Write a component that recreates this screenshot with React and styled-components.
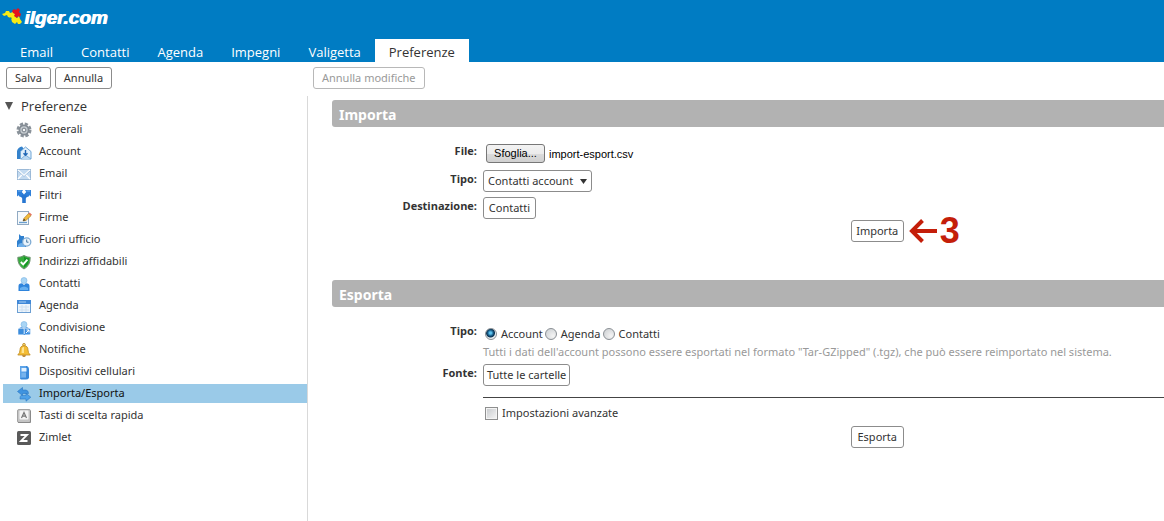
import React from "react";
import styled, { createGlobalStyle, css } from "styled-components";

const Global = createGlobalStyle`
  * { box-sizing: border-box; }
  body {
    margin: 0;
    background: #fff;
    color: #333;
    font: 11px/16px "Noto Sans", "Open Sans", sans-serif;
  }
  button, select, input { font: inherit; color: inherit; margin: 0; }
`;

const Page = styled.div`
  min-height: 100vh;
  display: flex;
  flex-direction: column;
`;

const Header = styled.header`
  background: #007cc3;
`;

const Brand = styled.a`
  display: flex;
  align-items: flex-start;
  height: 39px;
  padding: 7px 0 0 2px;
  color: #fff;
  text-decoration: none;
`;

const BrandName = styled.span`
  font: italic bold 19px/22px "Liberation Sans", Arial, sans-serif;
  text-shadow: 1px 0 #fff;
`;

const Tabs = styled.nav`
  display: flex;
  padding-left: 6px;
`;

const Tab = styled.a`
  height: 23px;
  padding: 2px 14px 0;
  font-family: "Open Sans", "Noto Sans", sans-serif;
  font-size: 13px;
  line-height: 22px;
  text-decoration: none;
  color: ${(p) => (p.$active ? "#333" : "#fff")};
  background: ${(p) => (p.$active ? "#fff" : "transparent")};
`;

const Toolbar = styled.div`
  display: flex;
  height: 34px;
  padding-top: 5px;
`;

const ToolGroup = styled.div`
  display: flex;
  gap: 4px;
  padding-left: 6px;
  width: ${(p) => p.$width || "auto"};
`;

const control = css`
  height: 22px;
  border: 1px solid ${(p) => (p.disabled ? "#b8b8b8" : "#8c8c8c")};
  border-radius: 3px;
  background: #fff;
  line-height: 18px;
`;

const Button = styled.button`
  ${control}
  min-width: ${(p) => (p.$tool ? "0" : "53px")};
  padding: ${(p) => (p.$tool ? "0 8px" : "0 3px")};
  color: ${(p) => (p.disabled ? "#999" : "#333")};
  white-space: nowrap;
`;

const Body = styled.div`
  flex: 1;
  display: flex;
`;

const Sidebar = styled.nav`
  width: 308px;
  flex: none;
  padding: 0 0 16px 3px;
  border-right: 1px solid #d9d9d9;
`;

const TreeHead = styled.h2`
  display: flex;
  align-items: center;
  gap: 8px;
  height: 20px;
  margin: 0 0 4px 2px;
  font-family: "Open Sans", "Noto Sans", sans-serif;
  font-size: 13px;
  font-weight: normal;
`;

const Tree = styled.ul`
  list-style: none;
  margin: 0;
  padding: 0;
  display: grid;
  gap: 3px;
`;

const TreeLink = styled.a`
  display: flex;
  align-items: center;
  gap: 7px;
  height: 19px;
  padding-left: 13px;
  text-decoration: none;
  color: ${(p) => (p.$active ? "#111" : "#333")};
  background: ${(p) => (p.$active ? "#9acae8" : "transparent")};
`;

const TreeText = styled.span`
  padding-bottom: 2px;
`;

const Main = styled.main`
  flex: 1;
  min-width: 0;
  padding: 4px 0 16px 24px;
`;

const Section = styled.section`
  margin-bottom: 37px;
`;

const SectionTitle = styled.h2`
  margin: 0 0 15px;
  height: 27px;
  padding: 2px 7px 0;
  border-radius: 3px 0 0 3px;
  background: #b2b2b2;
  color: #fff;
  font-size: 14px;
  line-height: 26px;
`;

const Row = styled.div`
  display: grid;
  grid-template-columns: 145px 1fr;
  column-gap: 6px;
  align-items: start;
  min-height: ${(p) => p.$height};
`;

const Label = styled.label`
  grid-column: 1;
  text-align: right;
  font-family: "Open Sans", "Noto Sans", sans-serif;
  font-weight: bold;
  line-height: 18px;
`;

const Field = styled.div`
  grid-column: 2;
  display: flex;
  align-items: center;
`;

const FilePick = styled(Field)`
  padding: 2px 0 0 3px;
  gap: 4px;
  color: #000;
  font: 11px/16px "Liberation Sans", Arial, sans-serif;
`;

const FileInput = styled.input`
  position: absolute;
  width: 1px;
  height: 1px;
  opacity: 0;
`;

const FileButton = styled.label`
  width: 59px;
  height: 19px;
  border: 1px solid #777;
  border-radius: 3px;
  background: linear-gradient(#f3f3f3, #ebebeb 50%, #dcdcdc 50%, #d0d0d0);
  text-align: center;
`;

const SelectBox = styled.span`
  display: grid;
  align-items: center;
  width: 109px;

  & > * { grid-area: 1 / 1; }
  & > svg { justify-self: end; margin-right: 5px; pointer-events: none; }
`;

const Select = styled.select`
  ${control}
  appearance: none;
  width: 100%;
  padding: 0 4px;
`;

const Choices = styled(Field)`
  gap: 2px;
  padding: 2px 0 0 2px;
`;

const Choice = styled.label`
  display: flex;
  align-items: center;
  gap: 4px;
  height: 20px;
`;

const Radio = styled.input`
  appearance: none;
  width: 12px;
  height: 12px;
  border: 1px solid #8a8f94;
  border-radius: 50%;
  background: radial-gradient(circle at 70% 70%, #f4f4f4, #c9cdd0);

  &:checked {
    background: radial-gradient(circle at 45% 40%, #5ec4f0 0 1px, #12537f 3px, #0c3350 4px, #e8eef2 5px);
  }
`;

const Checkbox = styled.input`
  appearance: none;
  width: 13px;
  height: 13px;
  border: 1px solid #8e8f8f;
  background: linear-gradient(135deg, #c6c9cc, #f6f6f6);
  box-shadow: inset 0 0 0 1px #f4f4f4;
`;

const Hint = styled.p`
  grid-column: 2;
  margin: 0;
  color: #999;
`;

const Rule = styled.hr`
  grid-column: 2;
  width: 100%;
  margin: 0;
  border: 0;
  border-top: 1px solid #444;
`;

const Action = styled(Field)`
  padding-left: 54%;
  gap: 5px;
  height: 24px;
`;

const Step = styled.span`
  display: flex;
  align-items: center;
  gap: 3px;
  color: #c41e0a;
  font: bold 36px/24px "Liberation Sans", Arial, sans-serif;
`;

const Icon = ({ children }) => (
  <svg width="16" height="16" viewBox="0 0 16 16" aria-hidden="true">{children}</svg>
);

const Person = () => (
  <>
    <circle cx="8" cy="4.5" r="3" fill="#a9d5f5" stroke="#79b4e2" strokeWidth=".6" />
    <path d="M2.500 15V10Q2.500 7.300 6 7.300L8 9L10 7.300Q13.500 7.300 13.500 10V15Z" fill="#2e84dc" />
    <path d="M4 12Q8 9 12 12V14H4Z" fill="#65aff0" />
  </>
);

const icons = {
  gear: (
    <>
      <circle cx="8" cy="8" r="6.200" fill="none" stroke="#8a929a" strokeWidth="2.600" strokeDasharray="3.200 1.670" />
      <circle cx="8" cy="8" r="4.600" fill="#c5cbd0" stroke="#848c94" strokeWidth="1.800" />
      <circle cx="8" cy="8" r="1.900" fill="#f3f4f5" stroke="#747d86" />
    </>
  ),
  account: (
    <>
      <path d="M1 15V7Q2 3 6 2.500L8 5L5 9V15Z" fill="#3482cc" />
      <path d="M4.500 7.500L9.500 3L15 7.500V15H4.500Z" fill="#e1effb" stroke="#6fa5d6" />
      <path d="M5 15L9.500 11L15 15" fill="#b9d7f1" stroke="#6fa5d6" strokeWidth=".8" />
      <path d="M9.500 6V11M7.500 9.200L9.500 11.200L11.500 9.200" fill="none" stroke="#2167b5" strokeWidth="1.400" />
    </>
  ),
  email: (
    <>
      <rect x="1.500" y="3.500" width="13" height="10" fill="#c3daf0" stroke="#9bb9d7" />
      <path d="M2 4L8 9.500L14 4M2 13L6.300 8.400M14 13L9.700 8.400" fill="none" stroke="#fff" strokeWidth="1.300" />
      <path d="M2 5L8 10.500L14 5" fill="none" stroke="#8fb2d5" strokeWidth=".7" />
    </>
  ),
  filter: (
    <>
      <path d="M8 15V10.500Q8 8 3.800 6M8 15V10.500Q8 8 12.200 6" fill="none" stroke="#2877d2" strokeWidth="3.600" />
      <path d="M1 2H7L5.800 4L7.500 6L4 9L2.500 7.300L1 8.500ZM15 2H9L10.200 4L8.500 6L12 9L13.500 7.300L15 8.500Z" fill="#2f80da" />
      <path d="M2 3H5.500M10.500 3H14" stroke="#72b0ee" />
    </>
  ),
  sign: (
    <>
      <rect x="1.500" y="1.500" width="11" height="13" fill="#f7fafc" stroke="#91aac3" />
      <path d="M3 12.500H11" stroke="#6c9fce" strokeWidth="1.400" />
      <path d="M7 11L8 8.200L12.500 3.600L15 5.800L10 10.400Z" fill="#f2bb3c" stroke="#a97821" strokeWidth=".6" />
      <path d="M12.500 3.600L13.600 2.400L16 4.700L15 5.800Z" fill="#e57362" />
      <path d="M7 11L8 8.800L9.500 10.200Z" fill="#333" />
    </>
  ),
  away: (
    <>
      <path d="M1 15V9L3 7V2L5 4H8V8L10 10V15Z" fill="#2f80cf" />
      <path d="M2 13Q5 9 9 13V15H2Z" fill="#6fb0eb" />
      <circle cx="10.700" cy="10" r="4.100" fill="#eaf4fc" stroke="#7fabd3" strokeWidth="1.300" />
      <path d="M10.700 7.500V10.200H12.500" fill="none" stroke="#47789f" />
    </>
  ),
  shield: (
    <>
      <path d="M8 1.500Q11 3.500 14.200 3.300Q14.500 11.500 8 15Q1.500 11.500 1.800 3.300Q5 3.500 8 1.500Z" fill="#35ae3c" stroke="#6d8f6f" />
      <path d="M8 2.800Q10.500 4.500 13 4.300Q13 10.500 8 13.600Z" fill="#169725" />
      <path d="M4.800 8L7.200 10.400L11.400 5.600" fill="none" stroke="#fff" strokeWidth="1.900" />
    </>
  ),
  person: <Person />,
  calendar: (
    <>
      <rect x="1.500" y="2.500" width="13" height="12" fill="#edf5fc" stroke="#6b9ed2" />
      <path d="M1 2H15V6H1Z" fill="#3f88d8" />
      <path d="M3 4H10" stroke="#a9d0f5" />
      <path d="M3 9H13M3 12H13M6 7V14M10 7V14" stroke="#cfe0f0" />
    </>
  ),
  share: (
    <>
      <Person />
      <rect x="2" y="8.500" width="6" height="6" rx="1" fill="#3b8cdc" stroke="#fff" strokeWidth=".5" />
      <rect x="8.500" y="8.500" width="6" height="6" rx="1" fill="#3f8fe0" stroke="#fff" strokeWidth=".5" />
      <path d="M10 13L13 10M10.500 10H13V12.500" fill="none" stroke="#fff" />
    </>
  ),
  bell: (
    <>
      <circle cx="8" cy="2.800" r="1.400" fill="#f6d26a" stroke="#b98a28" strokeWidth=".8" />
      <path d="M1.800 13Q4 11 4 8Q4 3.800 8 3.800Q12 3.800 12 8Q12 11 14.200 13Z" fill="#f4bd35" stroke="#bf8b22" strokeWidth=".8" />
      <path d="M6 6Q7 4.700 8 5V11H5.500Z" fill="#fde492" />
      <path d="M6 13.300H10Q9.800 15 8 15Q6.200 15 6 13.300Z" fill="#b27a1e" />
    </>
  ),
  phone: (
    <>
      <path d="M4 2H11Q13 3 13 5V14Q12 15.500 10 15.500H5Q4 15 4 14Z" fill="#3988d9" />
      <path d="M4 2H10V14H4Z" fill="#5ca3e8" />
      <rect x="5.500" y="4" width="5" height="3.500" fill="#e2f1ff" />
      <path d="M5.500 10H10M5.500 12H10" stroke="#93c4f1" />
    </>
  ),
  transfer: (
    <>
      <path d="M1.500 5.500L6.500 1.500V4H10Q12.500 4.500 12.500 7.500H6.500V9.500Z" fill="#3f93df" stroke="#2876c3" strokeWidth=".6" />
      <path d="M14.800 11.200L10 7.300V9.400H5Q4 10 4 13H10V15.200Z" fill="#4ea1e8" stroke="#2876c3" strokeWidth=".6" />
    </>
  ),
  key: (
    <>
      <rect x="1.500" y="1.500" width="13" height="13" rx="1.500" fill="#c4c4c4" stroke="#a3a3a3" />
      <path d="M2 14.500H14.500V3" fill="none" stroke="#8a8a8a" />
      <rect x="3.500" y="2.500" width="9" height="9" rx="1" fill="#f5f5f5" />
      <path d="M5.500 10L8 4.500L10.500 10M6.500 8.200H9.500" fill="none" stroke="#777" strokeWidth="1.200" />
    </>
  ),
  zimlet: (
    <>
      <rect x="1" y="1" width="14" height="14" rx="1.500" fill="#5a5a5a" />
      <path d="M4.500 5H11L5 11H11.500" fill="none" stroke="#fff" strokeWidth="1.800" />
    </>
  ),
};

const tabs = ["Email", "Contatti", "Agenda", "Impegni", "Valigetta", "Preferenze"];

const items = [
  ["Generali", "gear"],
  ["Account", "account"],
  ["Email", "email"],
  ["Filtri", "filter"],
  ["Firme", "sign"],
  ["Fuori ufficio", "away"],
  ["Indirizzi affidabili", "shield"],
  ["Contatti", "person"],
  ["Agenda", "calendar"],
  ["Condivisione", "share"],
  ["Notifiche", "bell"],
  ["Dispositivi cellulari", "phone"],
  ["Importa/Esporta", "transfer"],
  ["Tasti di scelta rapida", "key"],
  ["Zimlet", "zimlet"],
];

const LogoMark = () => (
  <svg width="22" height="18" viewBox="0 0 22 18" aria-hidden="true">
    <path d="M0 7L3 6L4 4H7L8 6L11 5L13 7V9L15 11L17 9L18 12L20 15L18 17H16L15 15L13 17L10 15L9 11L6 10L5 8L2 9Z" fill="#f7ea13" />
    <path d="M10 4L12 2L14 3L16 1L18 3L17 5L19 7L18 10L16 9L15 11L12 9L13 7L11 6Z" fill="#e5121d" />
    <path d="M8 10L10 11L9 12Z" fill="#1c9c4c" />
  </svg>
);

export default function App() {
  return (
    <Page>
      <Global />
      <Header>
        <Brand href="#">
          <LogoMark />
          <BrandName>ilger.com</BrandName>
        </Brand>
        <Tabs>
          {tabs.map((t) => (
            <Tab key={t} href="#" $active={t === "Preferenze"}>{t}</Tab>
          ))}
        </Tabs>
      </Header>
      <Toolbar>
        <ToolGroup $width="307px">
          <Button type="button" $tool>Salva</Button>
          <Button type="button" $tool>Annulla</Button>
        </ToolGroup>
        <ToolGroup>
          <Button type="button" $tool disabled>Annulla modifiche</Button>
        </ToolGroup>
      </Toolbar>
      <Body>
        <Sidebar>
          <TreeHead>
            <svg width="8" height="8" viewBox="0 0 8 8" aria-hidden="true">
              <path d="M0 0H8L4 8Z" fill="#555" />
            </svg>
            Preferenze
          </TreeHead>
          <Tree>
            {items.map(([name, icon]) => (
              <li key={name}>
                <TreeLink href="#" $active={icon === "transfer"}>
                  <Icon>{icons[icon]}</Icon>
                  <TreeText>{name}</TreeText>
                </TreeLink>
              </li>
            ))}
          </Tree>
        </Sidebar>
        <Main>
          <Section>
            <SectionTitle>Importa</SectionTitle>
            <Row $height="28px">
              <Label htmlFor="file">File:</Label>
              <FilePick>
                <FileInput id="file" type="file" />
                <FileButton htmlFor="file">Sfoglia...</FileButton>
                <span>import-esport.csv</span>
              </FilePick>
            </Row>
            <Row $height="27px">
              <Label htmlFor="type">Tipo:</Label>
              <Field>
                <SelectBox>
                  <Select id="type" defaultValue="a">
                    <option value="a">Contatti account</option>
                  </Select>
                  <svg width="7" height="5" viewBox="0 0 7 5" aria-hidden="true">
                    <path d="M0 0H7L3.500 5Z" fill="#333" />
                  </svg>
                </SelectBox>
              </Field>
            </Row>
            <Row $height="22px">
              <Label htmlFor="dest">Destinazione:</Label>
              <Field><Button id="dest" type="button">Contatti</Button></Field>
            </Row>
            <Row $height="22px">
              <Action>
                <Button type="button">Importa</Button>
                <Step>
                  <svg width="28" height="24" viewBox="0 0 28 24" aria-hidden="true">
                    <path d="M28 12H4M13.500 1.500L3 12L13.500 22.500" fill="none" stroke="#c41e0a" strokeWidth="4" />
                  </svg>
                  3
                </Step>
              </Action>
            </Row>
          </Section>
          <Section>
            <SectionTitle>Esporta</SectionTitle>
            <Row $height="22px" role="radiogroup" aria-labelledby="kind">
              <Label as="span" id="kind">Tipo:</Label>
              <Choices>
                {["Account", "Agenda", "Contatti"].map((k, i) => (
                  <Choice key={k}>
                    <Radio type="radio" name="kind" defaultChecked={i === 0} />
                    {k}
                  </Choice>
                ))}
              </Choices>
            </Row>
            <Row $height="20px">
              <Hint>
                Tutti i dati dell'account possono essere esportati nel formato "Tar-GZipped" (.tgz), che può essere reimportato nel sistema.
              </Hint>
            </Row>
            <Row $height="33px">
              <Label htmlFor="source">Fonte:</Label>
              <Field><Button id="source" type="button">Tutte le cartelle</Button></Field>
            </Row>
            <Row $height="4px"><Rule /></Row>
            <Row $height="24px">
              <Choices>
                <Choice>
                  <Checkbox type="checkbox" />
                  Impostazioni avanzate
                </Choice>
              </Choices>
            </Row>
            <Row $height="22px">
              <Action><Button type="button">Esporta</Button></Action>
            </Row>
          </Section>
        </Main>
      </Body>
    </Page>
  );
}
